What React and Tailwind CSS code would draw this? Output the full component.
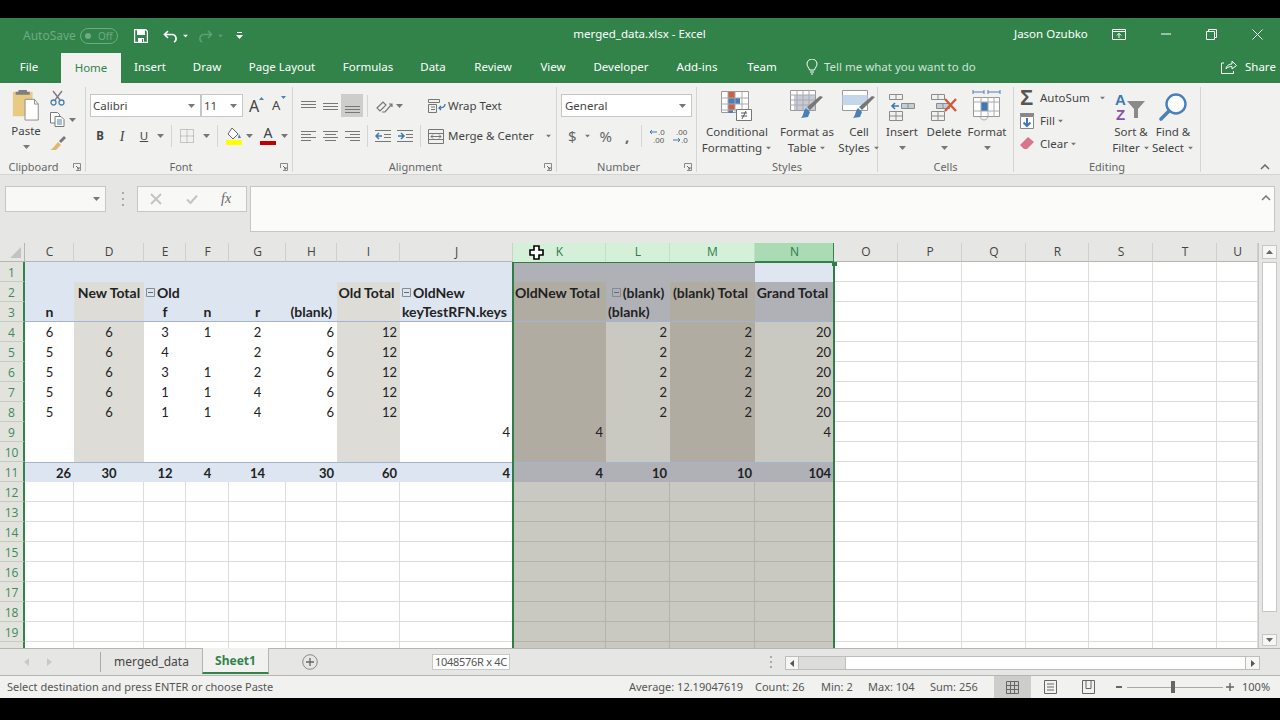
import React from 'react';

const Dd = ({ c = '#666', className = '' }) => (
  <svg width="7" height="4" viewBox="0 0 7 4" className={'shrink-0 ' + className}><path d="M0 0h7L3.500 4z" fill={c} /></svg>
);

const Launcher = () => (
  <svg width="8" height="8" viewBox="0 0 8 8" className="shrink-0"><path d="M.5 5V.5H7.500V7.500H3" fill="none" stroke="#8a8a8a" /><path d="M3 3l3 3M6 4v2H4" fill="none" stroke="#6a6a6a" /></svg>
);

const Lines = ({ rows, w = 15 }) => (
  <svg width={w} height="14" viewBox={`0 0 ${w} 14`} className="shrink-0">
    {rows.map(([x1, x2, y], i) => <path key={i} d={`M${x1} ${y}.5H${x2}`} stroke="#777" />)}
  </svg>
);

const Grp = ({ w, label, children, labelClass = 'justify-center', launcher }) => (
  <div className="flex flex-col h-[85px] mt-1 border-r border-[#d5d6d3] shrink-0" style={{ width: w }}>
    <div className="h-[73px] flex">{children}</div>
    <div className={'relative h-[12px] flex items-center text-[11px] leading-none text-[#666] ' + labelClass}>
      {label}
      {launcher && <span className="absolute right-[4px] top-[3px] flex"><Launcher /></span>}
    </div>
  </div>
);

const Big = ({ w, icon, l1, l2, dd1 }) => (
  <div className="flex flex-col items-center shrink-0" style={{ width: w }}>
    <div className="h-[36px] flex items-end justify-center">{icon}</div>
    <div className="h-[16px] mt-[1px] text-[11.5px] leading-[16px] whitespace-nowrap text-[#444]">{l1}</div>
    <div className="h-[16px] text-[11.5px] leading-[16px] whitespace-nowrap text-[#444] flex items-center gap-[3px]">
      {l2}{dd1 && <Dd c="#777" className="scale-75" />}
    </div>
  </div>
);

const IconGridBase = ({ children }) => (
  <svg width="34" height="36" viewBox="0 0 34 36">{children}</svg>
);

const CellsIcon = ({ kind }) => (
  <svg width="30" height="32" viewBox="0 0 30 32">
    <g fill="none" stroke="#8b8b8b">
      <path d="M2.500 3.500h13v5h-13zM9 3.500v5" />
      <path d="M2.500 20.500h13v9h-13zM2.500 25h13M9 20.500v9" />
      {kind === 'ins' && <path d="M14.500 12.500h13v5h-13zM21 12.500v5" fill="#c4ccd6" />}
      {kind === 'del' && <path d="M7.500 12.500h13v5h-13zM14 12.500v5" fill="#c4ccd6" />}
    </g>
    {kind === 'ins' && <path d="M12 15H5m3-3l-3 3 3 3" fill="none" stroke="#3f78b5" strokeWidth="1.600" />}
    {kind === 'del' && <path d="M16 8l11 12M27 8L16 20" stroke="#d05a3c" strokeWidth="2.400" />}
  </svg>
);

const Chk = () => (
  <svg width="12" height="12" viewBox="0 0 12 12"><path d="M1 6.500L4.500 10 11 2.500" fill="none" stroke="#c4c4c4" strokeWidth="2" /></svg>
);

function TitleBar() {
  return (
    <div className="h-[32px] bg-[#31834a] flex items-center text-white text-[11.5px] shrink-0">
      <div className="flex items-center mt-[4px]">
        <span className="ml-[23px] w-[54px] text-[12px] text-[#6eaa84]">AutoSave</span>
        <span className="ml-[3px] w-[38px] h-[16px] rounded-full border border-[#6eaa84] flex items-center text-[10px] text-[#6eaa84]">
          <span className="ml-[4px] w-[6px] h-[6px] rounded-full bg-[#6eaa84]" /><span className="ml-[7px]">Off</span>
        </span>
        <svg width="14" height="14" viewBox="0 0 14 14" className="ml-[16px]"><path d="M.5.5h11l2 2v11H.5z" fill="none" stroke="#fff" strokeWidth="1.400" /><path d="M3 1h8v5H3zM4 9h6v4H4z" fill="#fff" /><path d="M8 10h1v3H8z" fill="#31834a" /></svg>
        <svg width="15" height="13" viewBox="0 0 15 13" className="ml-[15px]"><path d="M5 1L1.500 4.500 5 8M2 4.500h7a4 4 0 0 1 2 7.500" fill="none" stroke="#fff" strokeWidth="1.600" /></svg>
        <Dd c="#fff" className="ml-[4px] scale-75" />
        <svg width="15" height="13" viewBox="0 0 15 13" className="ml-[9px]"><path d="M10 1l3.500 3.500L10 8M13 4.500H6a4 4 0 0 0-2 7.500" fill="none" stroke="#5e9f75" strokeWidth="1.600" /></svg>
        <Dd c="#5e9f75" className="ml-[4px] scale-75" />
        <svg width="7" height="8" viewBox="0 0 7 8" className="ml-[12px]"><path d="M1 .5h5" stroke="#fff" /><path d="M0 3h7L3.500 7z" fill="#fff" /></svg>
      </div>
      <div className="ml-[328px] w-[137px] text-center whitespace-nowrap">merged_data.xlsx  -  Excel</div>
      <div className="ml-[306px] w-[74px] whitespace-nowrap">Jason Ozubko</div>
      <svg width="14" height="11" viewBox="0 0 14 11" className="ml-[24px]"><path d="M.5.5h13v10H.5zM.5 2.500h13" fill="none" stroke="#fff" /><path d="M7 9V4.500M4.800 6.500L7 4.300l2.200 2.200" fill="none" stroke="#fff" /></svg>
      <svg width="10" height="2" viewBox="0 0 10 2" className="ml-[35px]"><path d="M0 1h10" stroke="#fff" /></svg>
      <svg width="11" height="11" viewBox="0 0 11 11" className="ml-[35px]"><path d="M.5 2.500h8v8h-8zM2.500 2.500v-2h8v8h-2" fill="none" stroke="#fff" /></svg>
      <svg width="11" height="11" viewBox="0 0 11 11" className="ml-[35px]"><path d="M.5.5l10 10M10.500.5l-10 10" stroke="#fff" /></svg>
    </div>
  );
}

const tabs = [['Insert', 58], ['Draw', 56], ['Page Layout', 94], ['Formulas', 78], ['Data', 52], ['Review', 68], ['View', 52], ['Developer', 84], ['Add-ins', 68], ['Team', 62]];

function TabBar() {
  return (
    <div className="h-[33px] bg-[#31834a] flex text-white text-[11.5px] shrink-0">
      <div className="w-[58px] pt-px flex items-center justify-center">File</div>
      <div className="w-[60px] ml-[3px] mt-[3px] bg-[#f1f2f0] text-[#31834a] flex items-center justify-center">Home</div>
      {tabs.map(([t, w]) => <div key={t} className="pt-px flex items-center justify-center whitespace-nowrap" style={{ width: w }}>{t}</div>)}
      <svg width="12" height="16" viewBox="0 0 12 16" className="ml-[13px] mt-[9px]"><path d="M3.500 11C3 8.500 1 7.500 1 5a5 5 0 0 1 10 0c0 2.500-2 3.500-2.500 6zM4 13h4M5 15h2" fill="none" stroke="#fff" /></svg>
      <div className="ml-[6px] pt-px flex items-center text-[#cfe3d6] whitespace-nowrap w-[180px]">Tell me what you want to do</div>
      <svg width="16" height="15" viewBox="0 0 16 15" className="ml-[217px] mt-[9px]"><path d="M3 4H.5v10.500h12V12M5 10c0-3 3-5 6-5V2l4.500 4.500L11 10V7.500C8.500 7.500 6.500 8 5 10z" fill="none" stroke="#fff" /></svg>
      <div className="ml-[8px] pt-px flex items-center">Share</div>
    </div>
  );
}

function Ribbon() {
  const sq = 'w-[22px] h-[22px] flex items-center justify-center shrink-0';
  const vdiv = 'w-px h-[22px] bg-[#d5d6d3] shrink-0';
  return (
    <div className="h-[92px] bg-[#f1f2f0] border-b border-[#d4d4d2] flex text-[#444] text-[11.5px] shrink-0">
      <Grp w={86} label={<span className="mr-[18px]">Clipboard</span>} launcher>
        <div className="ml-[10px] w-[32px] flex flex-col items-center">
          <svg width="30" height="32" viewBox="0 0 30 34" className="mt-[2px]">
            <path d="M1 3h21v26H1z" fill="#e9ca83" /><path d="M7 1h9v2h3v3H4V3h3z" fill="#7f7f7f" />
            <path d="M14 11h10l4 5v17H14z" fill="#fff" stroke="#8a8a8a" /><path d="M24 11v5h4" fill="none" stroke="#8a8a8a" />
          </svg>
          <div className="mt-[2px] leading-[16px]">Paste</div>
          <Dd c="#777" className="mt-[6px]" />
        </div>
        <div className="ml-[8px] flex flex-col mt-[3px]">
          <svg width="15" height="16" viewBox="0 0 15 16"><path d="M3 1l7 9M12 1L5 10" stroke="#777" strokeWidth="1.300" /><circle cx="3.500" cy="12.500" r="2.500" fill="none" stroke="#4a80b8" strokeWidth="1.300" /><circle cx="11.500" cy="12.500" r="2.500" fill="none" stroke="#4a80b8" strokeWidth="1.300" /></svg>
          <div className="flex items-center mt-[6px] gap-[4px]">
            <svg width="15" height="15" viewBox="0 0 15 15"><path d="M.5.5h7l2 2V11H.5z" fill="#fff" stroke="#777" /><path d="M5 4.500h6l3 3v7H5z" fill="#fff" stroke="#777" /><path d="M7 8h5M7 10h5M7 12h5" stroke="#4a80b8" /></svg>
            <Dd c="#777" />
          </div>
          <svg width="16" height="15" viewBox="0 0 16 15" className="mt-[8px]"><path d="M8 7l3 3-5 5H0c3-1 5-5 8-8z" fill="#e0b871" /><path d="M9 6l5-5 2 2-5 5z" fill="#777" /></svg>
        </div>
      </Grp>

      <Grp w={207} label={<span className="mr-[16px]">Font</span>} launcher>
        <div className="ml-[4px] flex flex-col">
          <div className="flex items-center mt-[7px] h-[23px]">
            <div className="w-[111px] h-[23px] bg-white border border-[#c6c6c6] flex items-center px-[2px] justify-between"><span>Calibri</span><Dd c="#777" className="mr-[3px]" /></div>
            <div className="w-[42px] h-[23px] bg-white border border-[#c6c6c6] flex items-center px-[2px] justify-between"><span>11</span><Dd c="#777" className="mr-[3px]" /></div>
            <span className="ml-[6px] text-[16px] leading-none relative w-[16px] flex">A<span className="absolute left-[10px] top-[-1px]"><svg width="5" height="3" viewBox="0 0 5 3"><path d="M0 3h5L2.500 0z" fill="#4a80b8" /></svg></span></span>
            <span className="ml-[7px] text-[13px] leading-none relative w-[14px] flex">A<span className="absolute left-[9px] top-[-3px]"><svg width="5" height="3" viewBox="0 0 5 3"><path d="M0 0h5L2.500 3z" fill="#4a80b8" /></svg></span></span>
          </div>
          <div className="flex items-center mt-[8px] h-[22px]">
            <span className="w-[20px] text-center font-bold">B</span>
            <span className="w-[24px] text-center italic font-['Liberation_Serif',serif] text-[14px]">I</span>
            <span className="w-[20px] text-center underline">U</span>
            <Dd c="#777" className="ml-[3px]" />
            <div className={vdiv + ' ml-[7px]'} />
            <svg width="14" height="14" viewBox="0 0 14 14" className="ml-[8px]"><path d="M.5.5h13v13H.5zM7 .5v13M.5 7h13" fill="none" stroke="#999" strokeDasharray="1 1" /></svg>
            <Dd c="#777" className="ml-[9px]" />
            <div className={vdiv + ' ml-[7px]'} />
            <svg width="16" height="18" viewBox="0 0 16 18" className="ml-[8px]"><path d="M6 1l6 6-5 5-5-5z" fill="#fff" stroke="#666" /><path d="M13 7l2 4h-3z" fill="#4a80b8" /><path d="M0 13h16v5H0z" fill="#ffff00" /></svg>
            <Dd c="#777" className="ml-[4px]" />
            <span className="ml-[7px] w-[16px] flex flex-col items-center leading-[12px]"><span className="text-[14px] h-[14px]">A</span><span className="w-[16px] h-[4px] bg-[#c00000]" /></span>
            <Dd c="#777" className="ml-[5px]" />
          </div>
        </div>
      </Grp>

      <Grp w={264} label={<span className="mr-[18px]">Alignment</span>} launcher>
        <div className="ml-[4px] flex flex-col w-[131px]">
          <div className="flex items-center mt-[7px] h-[23px]">
            <div className={sq}><Lines rows={[[0, 15, 2], [0, 15, 5], [0, 15, 8]]} /></div>
            <div className={sq}><Lines rows={[[0, 15, 4], [0, 15, 7], [0, 15, 10]]} /></div>
            <div className={sq + ' bg-[#cdcdcb] h-[23px]'}><Lines rows={[[0, 15, 7], [0, 15, 10], [0, 15, 13]]} /></div>
            <div className={vdiv + ' ml-[4px]'} />
            <svg width="18" height="16" viewBox="0 0 18 16" className="ml-[7px]"><path d="M2 10l6-6 3 3-6 6zM7 14h3l7-8M14 6h3v3" fill="none" stroke="#777" strokeWidth="1.200" /></svg>
            <Dd c="#777" className="ml-[3px]" />
          </div>
          <div className="flex items-center mt-[8px] h-[22px]">
            <div className={sq}><Lines rows={[[0, 15, 2], [0, 10, 5], [0, 15, 8], [0, 10, 11]]} /></div>
            <div className={sq}><Lines rows={[[0, 15, 2], [2, 13, 5], [0, 15, 8], [2, 13, 11]]} /></div>
            <div className={sq}><Lines rows={[[0, 15, 2], [5, 15, 5], [0, 15, 8], [5, 15, 11]]} /></div>
            <div className={vdiv + ' ml-[4px]'} />
            <svg width="16" height="14" viewBox="0 0 16 14" className="ml-[7px]"><path d="M0 1.500h16M9 5.500h7M9 8.500h7M0 12.500h16" stroke="#777" /><path d="M7 7H1m3-3L1 7l3 3" fill="none" stroke="#3f78b5" strokeWidth="1.500" /></svg>
            <svg width="16" height="14" viewBox="0 0 16 14" className="ml-[6px]"><path d="M0 1.500h16M9 5.500h7M9 8.500h7M0 12.500h16" stroke="#777" /><path d="M1 7h6M4 4l3 3-3 3" fill="none" stroke="#3f78b5" strokeWidth="1.500" /></svg>
            <div className={vdiv + ' ml-[7px]'} />
          </div>
        </div>
        <div className="flex flex-col">
          <div className="flex items-center mt-[7px] h-[23px] gap-[2px]">
            <svg width="18" height="16" viewBox="0 0 18 16"><path d="M.5 1.500h11v3H.5zM.5 6.500h8M.5 6.500v8h8v-8M3 9h4M3 11.500h4" fill="none" stroke="#777" /><path d="M17 6c0 3-2 4-6 4m2-2l-2 2 2 2" fill="none" stroke="#3f78b5" strokeWidth="1.300" /></svg>
            <span className="whitespace-nowrap">Wrap Text</span>
          </div>
          <div className="flex items-center mt-[8px] h-[22px] gap-[2px]">
            <svg width="18" height="15" viewBox="0 0 18 15"><path d="M.5.5h15v14H.5zM.5 4.500h15M.5 10.500h15" fill="none" stroke="#777" /><path d="M3 7.500h10M5 5.500l-2 2 2 2M11 5.500l2 2-2 2" fill="none" stroke="#777" /></svg>
            <span className="whitespace-nowrap">Merge &amp; Center</span>
            <Dd c="#777" className="ml-[9px] scale-75" />
          </div>
        </div>
      </Grp>

      <Grp w={140} label={<span className="mr-[16px]">Number</span>} launcher>
        <div className="ml-[4px] flex flex-col">
          <div className="w-[131px] h-[23px] mt-[7px] bg-white border border-[#c6c6c6] flex items-center justify-between px-[3px]"><span>General</span><Dd c="#777" className="mr-[2px]" /></div>
          <div className="flex items-center mt-[8px] h-[22px]">
            <span className="ml-[7px] text-[15px] text-[#666]">$</span>
            <Dd c="#777" className="ml-[7px] scale-75" />
            <span className="ml-[9px] text-[15px] text-[#666]">%</span>
            <span className="ml-[13px] w-[8px] text-[15px] font-bold text-[#666]">,</span>
            <div className={vdiv + ' ml-[8px]'} />
            <svg width="19" height="16" viewBox="0 0 19 16" className="ml-[7px]"><text x="9" y="7" fontSize="8" fill="#555" fontFamily="Liberation Sans">.0</text><text x="4" y="15" fontSize="8" fill="#555" fontFamily="Liberation Sans">.00</text><path d="M8 4H1m2-2L1 4l2 2" fill="none" stroke="#3f78b5" /></svg>
            <svg width="19" height="16" viewBox="0 0 19 16" className="ml-[4px]"><text x="4" y="7" fontSize="8" fill="#555" fontFamily="Liberation Sans">.00</text><text x="9" y="15" fontSize="8" fill="#555" fontFamily="Liberation Sans">.0</text><path d="M1 12h7m-2-2l2 2-2 2" fill="none" stroke="#3f78b5" /></svg>
          </div>
        </div>
      </Grp>

      <Grp w={181} label="Styles">
        <div className="ml-[4px]" />
        <Big w={72} l1="Conditional" l2="Formatting" dd1 icon={
          <svg width="32" height="32" viewBox="0 0 32 32"><path d="M.5.5h27v21H.5z" fill="#fff" stroke="#999" /><path d="M7 1h7v6H7zM7 13h7v6H7z" fill="#c9604a" /><path d="M7 7h12v6H7zM7 19h5v3H7z" fill="#4a80b8" /><path d="M.5 7h27M.5 13h27M.5 19h27M7 .5v21M14 .5v21M21 .5v21" fill="none" stroke="#aaa" /><path d="M15.500 18.500h15v11h-15z" fill="#fff" stroke="#777" /><path d="M20 22h6M20 25h6M25 20l-4 8" stroke="#555" /></svg>
        } />
        <Big w={68} l1="Format as" l2="Table" dd1 icon={
          <IconGridBase><path d="M.5 3.500h25v20H.5z" fill="#fff" stroke="#999" /><path d="M4 8h21v15H4z" fill="#c5cbd7" /><path d="M.5 8h25M.5 13h25M.5 18h25M7 3.500v20M13 3.500v20M19 3.500v20" fill="none" stroke="#aaa" /><path d="M33 10l-13 13-3-3 13-11z" fill="#777" /><path d="M16 21l4 4-2 5-7 1c3-3 2-7 5-10z" fill="#4a80b8" /></IconGridBase>
        } />
        <Big w={36} l1="Cell" l2="Styles" dd1 icon={
          <IconGridBase><path d="M.5 3.500h25v20H.5z" fill="#fff" stroke="#999" /><path d="M.5 8h25v10H.5z" fill="#c5d5ea" /><path d="M33 10l-13 13-3-3 13-11z" fill="#777" /><path d="M16 21l4 4-2 5-7 1c3-3 2-7 5-10z" fill="#4a80b8" /></IconGridBase>
        } />
      </Grp>

      <Grp w={136} label="Cells">
        <div className="ml-[3px]" />
        <Big w={42} l1="Insert" l2={<Dd c="#777" />} icon={<CellsIcon kind="ins" />} />
        <Big w={42} l1="Delete" l2={<Dd c="#777" />} icon={<CellsIcon kind="del" />} />
        <Big w={44} l1="Format" l2={<Dd c="#777" />} icon={
          <svg width="30" height="34" viewBox="0 0 30 34"><path d="M1 3h11M1 1v4M12 1v4M16 3h12M16 1v4M28 1v4" stroke="#4a80b8" fill="none" /><path d="M1.500 8.500h26v19h-26z" fill="#fff" stroke="#999" /><path d="M9 13h7v9H9z" fill="#3f78b5" /><path d="M1.500 13h26M1.500 22h26M9 8.500v19M16 8.500v19M22 8.500v19M8 28c2 4 6 4 8 0" fill="none" stroke="#aaa" /></svg>
        } />
      </Grp>

      <Grp w={187} label="Editing">
        <div className="ml-[6px] flex flex-col w-[91px] mt-[-1px]">
          <div className="flex items-center h-[23px]">
            <span className="w-[17px] text-[22px] font-bold leading-none text-[#555] font-['Liberation_Sans',sans-serif]">Σ</span>
            <span className="ml-[3px]">AutoSum</span><Dd c="#777" className="ml-[9px] scale-75" />
          </div>
          <div className="flex items-center h-[23px]">
            <svg width="15" height="16" viewBox="0 0 15 16"><path d="M.5 3.500h13v12H.5z" fill="#fff" stroke="#888" /><path d="M0 0h14v3H0z" fill="#888" /><path d="M7 5v8M3.500 9.500L7 13l3.500-3.500" fill="none" stroke="#3f78b5" strokeWidth="2" /></svg>
            <span className="ml-[5px]">Fill</span><Dd c="#777" className="ml-[2px] scale-75" />
          </div>
          <div className="flex items-center h-[23px]">
            <svg width="14" height="13" viewBox="0 0 14 13"><path d="M8 0l6 5-7 7H4L0 8z" fill="#d9748c" /></svg>
            <span className="ml-[6px]">Clear</span><Dd c="#777" className="ml-[2px] scale-75" />
          </div>
        </div>
        <Big w={40} l1="Sort &" l2="Filter" dd1 icon={
          <svg width="32" height="32" viewBox="0 0 32 32"><text x="0" y="14" fontSize="15" fontWeight="bold" fill="#3f78b5" fontFamily="Liberation Sans">A</text><text x="1" y="29" fontSize="15" fontWeight="bold" fill="#8a4fa3" fontFamily="Liberation Sans">Z</text><path d="M12 10h18l-7 8v9h-4v-9z" fill="#8a8a8a" /></svg>
        } />
        <Big w={44} l1="Find &" l2="Select" dd1 icon={
          <svg width="30" height="32" viewBox="0 0 30 32"><circle cx="18" cy="13" r="9.500" fill="#fff" stroke="#4a80b8" strokeWidth="2.400" /><path d="M11 20L3 28" stroke="#4a80b8" strokeWidth="3.600" strokeLinecap="round" /></svg>
        } />
      </Grp>

      <div className="flex-1 flex justify-end items-end pb-[4px] pr-[10px]">
        <svg width="10" height="6" viewBox="0 0 10 6"><path d="M1 5l4-4 4 4" fill="none" stroke="#666" strokeWidth="1.500" /></svg>
      </div>
    </div>
  );
}

function FormulaBar() {
  return (
    <div className="h-[68px] bg-[#e6e6e4] flex items-start pt-[11px] shrink-0">
      <div className="ml-[5px] w-[101px] h-[26px] bg-[#f8f9f6] border border-[#c6c6c6] flex items-center justify-end pr-[5px]"><Dd c="#777" /></div>
      <div className="ml-[15px] w-[3px] h-[14px] mt-[6px] flex flex-col justify-between items-center">
        <span className="w-[2px] h-[2px] bg-[#aaa]" /><span className="w-[2px] h-[2px] bg-[#aaa]" /><span className="w-[2px] h-[2px] bg-[#aaa]" />
      </div>
      <div className="ml-[13px] w-[110px] h-[26px] bg-[#f8f9f6] border border-[#c6c6c6] flex items-center">
        <svg width="12" height="12" viewBox="0 0 12 12" className="ml-[12px]"><path d="M1 1l10 10M11 1L1 11" stroke="#c4c4c4" strokeWidth="2" /></svg>
        <span className="ml-[24px] flex"><Chk /></span>
        <span className="ml-[23px] italic font-['Liberation_Serif',serif] text-[14px] text-[#666] leading-none">fx</span>
      </div>
      <div className="ml-[3px] w-[1025px] h-[46px] bg-[#fbfcf9] border border-[#c6c6c6] flex justify-end pt-[8px] pr-[3px]">
        <svg width="10" height="6" viewBox="0 0 10 6"><path d="M1 5l4-4 4 4" fill="none" stroke="#777" strokeWidth="1.500" /></svg>
      </div>
    </div>
  );
}

const COLS = ['C', 'D', 'E', 'F', 'G', 'H', 'I', 'J', 'K', 'L', 'M', 'N', 'O', 'P', 'Q', 'R', 'S', 'T', 'U'];
const GRID = 'grid grid-cols-[25px_49px_70px_42px_43px_57px_51px_63px_113px_93px_64px_85px_79px_64px_64px_64px_63px_64px_64px_41px]';

function ColHeader() {
  return (
    <div className={GRID + ' h-[19px] shrink-0 bg-[#e6e6e4] text-[#444]'}>
      <div className="border-b border-r border-[#b5b5b3] flex justify-end items-end pr-[3px] pb-[3px]">
        <svg width="11" height="11" viewBox="0 0 11 11"><path d="M11 0v11H0z" fill="#c3c3c1" /></svg>
      </div>
      {COLS.map((c) => {
        const sel = c === 'K' || c === 'L' || c === 'M';
        const cl = c === 'N'
          ? 'bg-[#abdbb3] text-[#2c7c45] border-[#31834a]'
          : sel ? 'bg-[#d5f0d9] text-[#2c7c45] border-[#d5f0d9] border-r-[#bfe2c6]' : 'border-[#b5b5b3] border-r-[#cfcfcd]';
        return <div key={c} className={'flex items-center justify-center pl-px border-b border-r text-[12px] font-["Open_Sans",sans-serif] ' + cl}>{c}</div>;
      })}
    </div>
  );
}

const blank = Array(12).fill('');
const rowsData = {
  2: ['', 'New Total', '⊟Old', '', '', '', 'Old Total', '⊟OldNew', 'OldNew Total', '⊟(blank)', '(blank) Total', 'Grand Total'],
  3: ['n', '', 'f', 'n', 'r', '(blank)', '', 'keyTestRFN.keys', '', '(blank)', '', ''],
  4: ['6', '6', '3', '1', '2', '6', '12', '', '', '2', '2', '20'],
  5: ['5', '6', '4', '', '2', '6', '12', '', '', '2', '2', '20'],
  6: ['5', '6', '3', '1', '2', '6', '12', '', '', '2', '2', '20'],
  7: ['5', '6', '1', '1', '4', '6', '12', '', '', '2', '2', '20'],
  8: ['5', '6', '1', '1', '4', '6', '12', '', '', '2', '2', '20'],
  9: ['', '', '', '', '', '', '', '4', '4', '', '', '4'],
  11: ['26', '30', '12', '4', '14', '30', '60', '4', '4', '10', '10', '104'],
};

function cellBg(r, c) {
  if (c >= 12) return 'border-b border-r border-[#dddddb]';
  const sel = c >= 8;
  if (r >= 12) return sel ? 'bg-[#c9c9c1] border-b border-r border-[#b3b3ab]' : 'border-b border-r border-[#dddddb]';
  if (r === 1) {
    if (c === 11) return 'bg-[#dfe6f2] border-b border-[#dfe6f2]';
    return sel ? 'bg-[#b0b1b7]' : 'bg-[#dde5f1]';
  }
  if (r === 11) return (sel ? 'bg-[#b0b1b7]' : 'bg-[#dde5f1]') + ' border-t border-[#a4b4ce] font-bold pt-[2px]';
  const total = c === 1 || c === 6;
  const selTotal = c === 8 || c === 10;
  if (r === 2 || r === 3) {
    const bb = r === 3 ? ' border-b border-[#a4b4ce]' : '';
    const t = ' font-bold text-[14px]';
    if (total) return 'bg-[#dddcd6]' + t + bb;
    if (selTotal) return 'bg-[#b0aca2]' + t + bb;
    if (sel) return 'bg-[#b0b1b7]' + t + bb;
    return 'bg-[#dde5f1]' + t + bb;
  }
  if (total) return 'bg-[#dddcd6] pt-px';
  if (selTotal) return 'bg-[#b0aca2] pt-px';
  if (sel) return 'bg-[#c9c9c1] pt-px';
  return 'bg-white pt-px';
}

function cellAlign(r, c) {
  if (r === 11) return c <= 0 || c >= 5 ? 'justify-end pr-[3px]' : 'justify-center';
  if (r === 2) return c === 1 ? 'justify-center' : c === 6 || c === 8 || c === 10 || c === 11 ? 'justify-center pr-[4px]' : c === 9 ? 'justify-center' : 'justify-start pl-[2px]';
  if (r === 3) return c === 5 ? 'justify-end pr-[5px]' : c === 7 || c === 9 ? 'justify-start pl-[2px]' : 'justify-center';
  if (c <= 4) return 'justify-center';
  return 'justify-end pr-[3px]';
}

function Cell({ r, c }) {
  const v = (rowsData[r] || blank)[c] || '';
  const tree = v.startsWith('⊟');
  return (
    <div className={'h-5 flex items-center whitespace-nowrap ' + cellBg(r, c) + ' ' + cellAlign(r, c)}>
      {tree && (
        <svg width="9" height="9" viewBox="0 0 9 9" className="mr-[2px] shrink-0"><path d="M.5.5h8v8h-8z" fill="none" stroke="#858a93" /><path d="M2 4.500h5" stroke="#666" /></svg>
      )}
      {tree ? v.slice(1) : v}
    </div>
  );
}

function Sheet() {
  const rows = Array.from({ length: 20 }, (_, i) => i + 1);
  return (
    <div className="relative h-[386px] shrink-0 overflow-hidden bg-white">
      <div className="font-['Lato',sans-serif] text-[13px] text-[#222]">
        {rows.map((r) => (
          <div key={r} className={GRID}>
            <div className="h-5 pt-[2px] bg-[#e2e3dd] border-b border-r-2 border-b-[#c8c9c3] border-r-[#31834a] flex items-center justify-center text-[12px] text-[#3d8a5c] font-['Open_Sans',sans-serif]">
              {r < 20 ? r : ''}
            </div>
            {COLS.map((_, c) => <Cell key={c} r={r} c={c} />)}
          </div>
        ))}
      </div>
      <div className="absolute left-[512px] top-[-1px] w-[323px] h-[400px] border-2 border-b-0 border-[#2f7d47] pointer-events-none" />
      <div className="absolute left-[832px] top-[-1px] w-[5px] h-[5px] bg-[#2f7d47]" />
    </div>
  );
}

function VScroll() {
  return (
    <div className="absolute right-0 top-0 w-[22px] h-[405px] bg-[#e6e6e4] border-l border-[#c6c6c6] flex flex-col items-center">
      <div className="mt-[2px] w-[15px] h-[14px] bg-[#f6f6f4] border border-[#c6c6c6] flex items-center justify-center"><svg width="7" height="4" viewBox="0 0 7 4"><path d="M0 4h7L3.500 0z" fill="#666" /></svg></div>
      <div className="mt-[3px] w-[15px] h-[350px] bg-white border border-[#c6c6c6]" />
      <div className="mt-[22px] w-[15px] h-[12px] bg-[#f6f6f4] border border-[#c6c6c6] flex items-center justify-center"><Dd c="#666" /></div>
    </div>
  );
}

function TabsRow() {
  return (
    <div className="relative h-[28px] bg-[#e6e6e4] border-t border-[#b5b5b3] border-b flex items-start shrink-0 text-[12px] text-[#444]">
      <svg width="5" height="8" viewBox="0 0 5 8" className="ml-[24px] mt-[9px]"><path d="M5 0v8L0 4z" fill="#c9c9c7" /></svg>
      <svg width="5" height="8" viewBox="0 0 5 8" className="ml-[18px] mt-[9px]"><path d="M0 0v8l5-4z" fill="#c9c9c7" /></svg>
      <div className="ml-[48px] w-px h-[20px] mt-[3px] bg-[#aaa]" />
      <div className="w-[101px] h-[26px] flex items-center justify-center text-[12px]">merged_data</div>
      <div className="w-[67px] h-[26px] mt-[-1px] pt-[2px] bg-[#f1f2f0] border-x border-[#b5b5b3] border-b-2 border-b-[#31834a] flex items-center justify-center font-bold text-[#31834a]">Sheet1</div>
      <svg width="16" height="16" viewBox="0 0 16 16" className="ml-[33px] mt-[5px]"><circle cx="8" cy="8" r="7.300" fill="none" stroke="#888" /><path d="M4 8h8M8 4v8" stroke="#666" strokeWidth="1.300" /></svg>
      <div className="absolute left-[432px] top-[5px] w-[78px] h-[16px] bg-white border border-[#c8c8c8] text-[11px] tracking-[-0.3px] leading-[14px] text-center whitespace-nowrap text-[#555]">1048576R x 4C</div>
      <div className="ml-[452px] mt-[7px] w-[2px] h-[12px] flex flex-col justify-between">
        <span className="w-[2px] h-[2px] bg-[#aaa]" /><span className="w-[2px] h-[2px] bg-[#aaa]" /><span className="w-[2px] h-[2px] bg-[#aaa]" />
      </div>
      <div className="ml-[13px] mt-[7px] w-[475px] h-[14px] flex border border-[#bdbdbb]">
        <div className="w-[13px] bg-[#f6f6f4] border-r border-[#bdbdbb] flex items-center justify-center"><svg width="4" height="7" viewBox="0 0 4 7"><path d="M4 0v7L0 3.500z" fill="#555" /></svg></div>
        <div className="w-[46px] bg-[#dcdcda]" />
        <div className="flex-1 bg-white border-l border-r border-[#bdbdbb]" />
        <div className="w-[13px] bg-[#f6f6f4] flex items-center justify-center"><svg width="4" height="7" viewBox="0 0 4 7"><path d="M0 0v7l4-3.500z" fill="#555" /></svg></div>
      </div>
    </div>
  );
}

function StatusBar() {
  return (
    <div className="h-[22px] bg-[#f1f2f0] flex items-center text-[11px] text-[#555] shrink-0 whitespace-nowrap">
      <span className="ml-[7px] w-[622px]">Select destination and press ENTER or choose Paste</span>
      <span className="w-[126px]">Average: 12.19047619</span>
      <span className="w-[66px]">Count: 26</span>
      <span className="w-[47px]">Min: 2</span>
      <span className="w-[62px]">Max: 104</span>
      <span className="w-[64px]">Sum: 256</span>
      <div className="w-[37px] h-[22px] bg-[#cdcdcb] flex items-center justify-center">
        <svg width="13" height="13" viewBox="0 0 13 13"><path d="M.5.5h12v12H.5zM.5 4.500h12M.5 8.500h12M4.500.5v12M8.500.5v12" fill="none" stroke="#666" /></svg>
      </div>
      <svg width="13" height="14" viewBox="0 0 13 14" className="ml-[13px]"><path d="M.5.5h12v13H.5zM3 4h7M3 7h7M3 10h7" fill="none" stroke="#666" /></svg>
      <svg width="13" height="14" viewBox="0 0 13 14" className="ml-[25px]"><path d="M.5.5h12v13H.5zM4 .5v8h5v-8" fill="none" stroke="#666" /></svg>
      <span className="ml-[21px] w-[6px] h-[2px] bg-[#666]" />
      <div className="ml-[5px] w-[96px] h-px bg-[#aaa] flex items-center">
        <span className="ml-[44px] w-[4px] h-[12px] bg-[#666]" />
      </div>
      <svg width="8" height="8" viewBox="0 0 8 8" className="ml-[3px]"><path d="M0 4h8M4 0v8" stroke="#666" strokeWidth="1.500" /></svg>
      <span className="ml-[8px]">100%</span>
    </div>
  );
}

export default function App() {
  return (
    <div className="w-[1280px] h-[720px] overflow-hidden bg-black flex flex-col font-['Noto_Sans',sans-serif]">
      <div className="h-[18px] shrink-0" />
      <TitleBar />
      <TabBar />
      <Ribbon />
      <FormulaBar />
      <div className="relative flex flex-col shrink-0">
        <ColHeader />
        <Sheet />
        <VScroll />
        <div className="absolute left-[529px] top-[2px]">
          <svg width="15" height="15" viewBox="0 0 15 15"><path d="M5 1h5v4h4v5h-4v4H5v-4H1V5h4z" fill="#fff" stroke="#000" strokeWidth="1.600" /></svg>
        </div>
      </div>
      <TabsRow />
      <StatusBar />
    </div>
  );
}
